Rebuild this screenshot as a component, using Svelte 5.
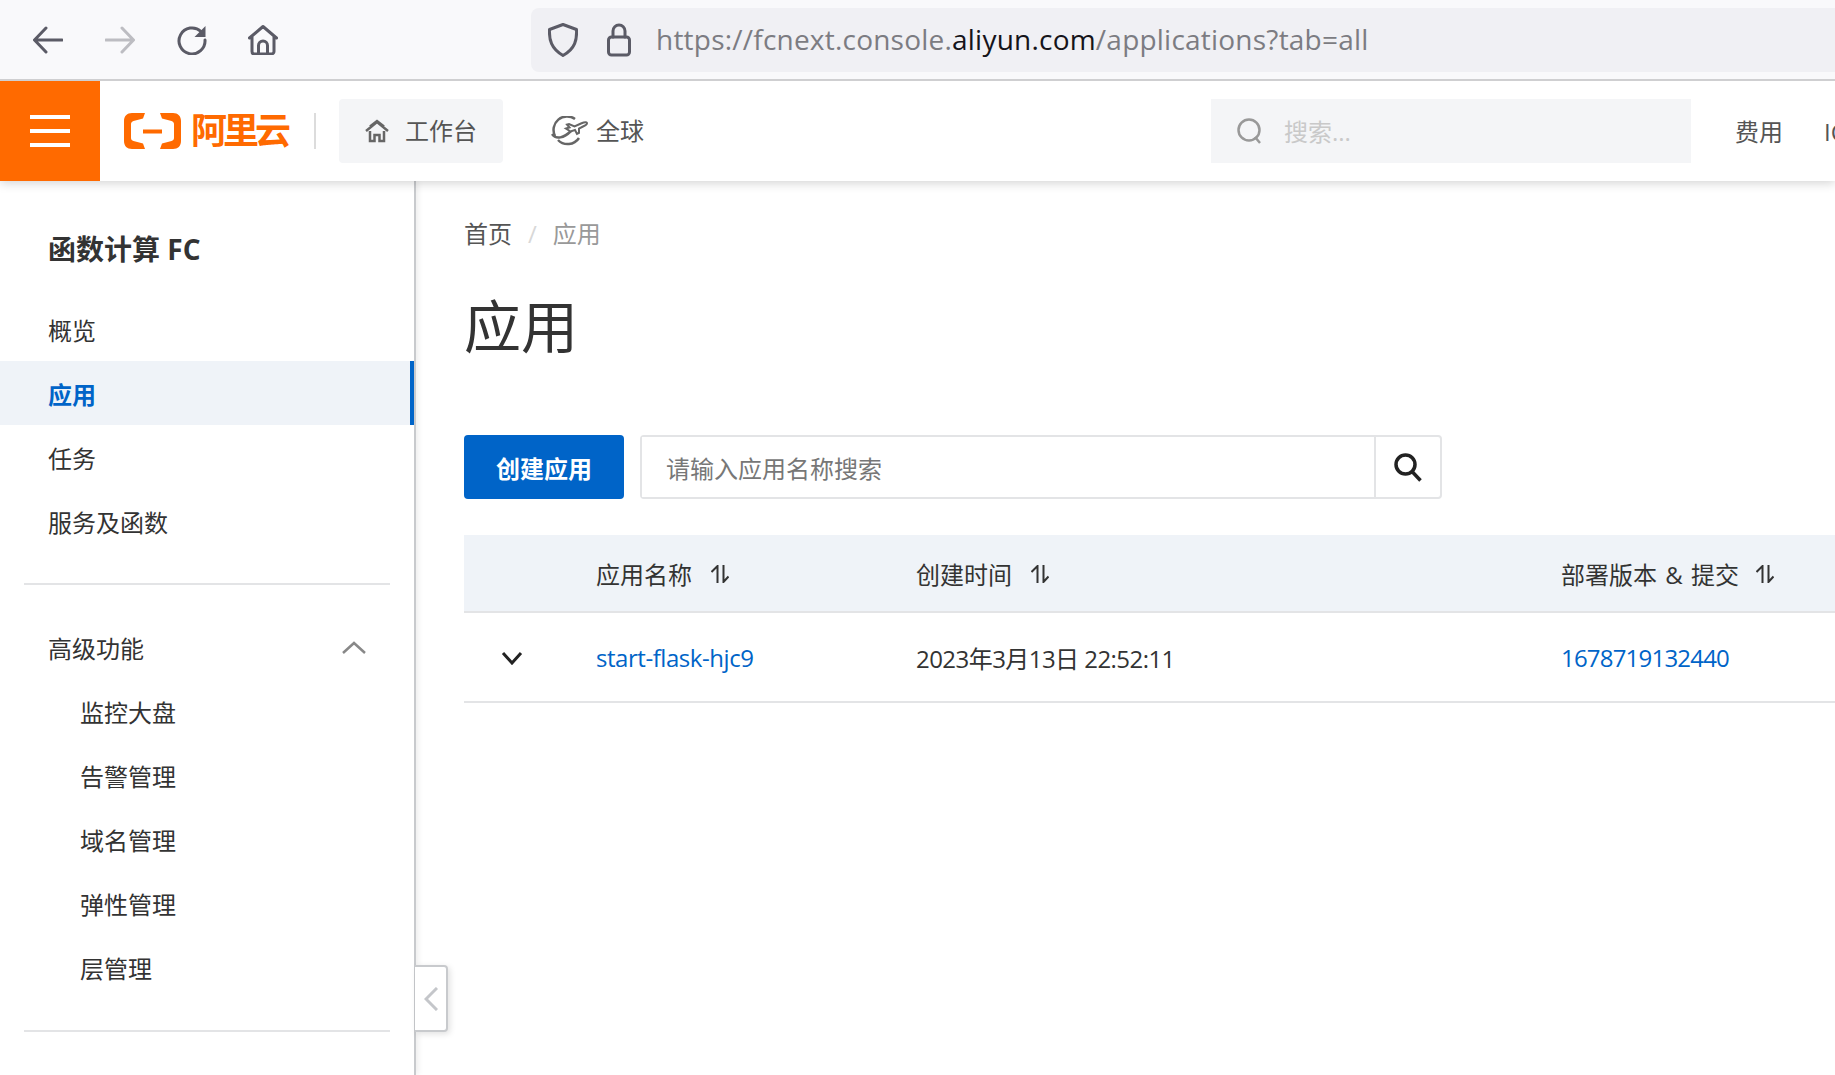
<script>
  const topNav = ["概览", "应用", "任务", "服务及函数"];
  const advanced = ["监控大盘", "告警管理", "域名管理", "弹性管理", "层管理"];
  let open = $state(true);
</script>

<div class="browser">
  <div class="tools">
    <svg class="tb" viewBox="0 0 30 28" width="30" height="28"><path d="M29 14H2M13 2 1.500 14 13 26" /></svg>
    <svg class="tb off" viewBox="0 0 30 28" width="30" height="28"><path d="M1 14h27M17 2l11.500 12L17 26" /></svg>
    <svg class="tb" viewBox="0 0 30 30" width="30" height="30"><path d="M24 6.500A13 13 0 1 0 28 15" /><path class="fill" d="M28.500 1v11h-11z" /></svg>
    <svg class="tb home" viewBox="0 0 30 30" width="30" height="30"><path d="M1.500 13 15 1.500 28.500 13M4 11v15.500A2.500 2.500 0 0 0 6.500 29h17a2.500 2.500 0 0 0 2.500-2.500V11M10.500 29V20.500a4.500 4.500 0 0 1 9 0V29" /></svg>
  </div>
  <div class="address">
    <svg class="tb" viewBox="0 0 30 34" width="30" height="34"><path d="M15 1.500 28.500 6.500c.5 10-1 19-13.500 26C3 25.500 1 16.500 1.500 6.500z" /></svg>
    <svg class="tb" viewBox="0 0 24 34" width="24" height="34"><path d="M6 14V8a6 6 0 0 1 12 0v6" /><rect x="1.500" y="14" width="21" height="18" rx="3" /></svg>
    <span class="url">https://fcnext.console.<b>aliyun.com</b>/applications?tab=all</span>
  </div>
</div>

<header class="topbar">
  <button class="burger" aria-label="菜单"><i></i><i></i><i></i></button>
  <div class="logo">
    <svg viewBox="0 0 57 36" width="57" height="36">
      <path d="M21 0H8C3 0 0 3 0 8v20c0 5 3 8 8 8h13l-2-5.500-9.500-2.500C8 27.500 7 26.500 7 25V11c0-1.500 1-2.500 2.500-3L19 5.500z" />
      <path d="M36 0h13c5 0 8 3 8 8v20c0 5-3 8-8 8H36l2-5.500 9.500-2.500c1.500-.5 2.500-1.500 2.500-3V11c0-1.500-1-2.500-2.500-3L38 5.500z" />
      <rect x="19" y="16.500" width="19" height="4" />
    </svg>
    <span>阿里云</span>
  </div>
  <div class="sep"></div>
  <div class="nav-item boxed">
    <svg viewBox="0 0 26 24" width="26" height="24"><path d="M2 12 13 3l11 9M6 12v10h4.500v-6h5v6H20V12M6 7.500 13 2l7 5.500" /></svg>
    <span>工作台</span>
  </div>
  <div class="nav-item">
    <svg viewBox="0 0 38 30" width="38" height="30">
      <path d="M24 3A13.500 13.500 0 0 0 4 20M7 24A13.500 13.500 0 0 0 28 22M1 18c4 6 12 4 19-3" />
      <path class="plane" d="M15 12.500l3.500-1-2.500-3 2-.5 5.500 2.500 6.500-3c2.500-1 5.500-1.500 6-.5s-1.500 2.500-4 3.500l-4 2v4.500l-2 1-2-4-4.500 1.500z" />
    </svg>
    <span>全球</span>
  </div>
  <div class="global-search">
    <svg viewBox="0 0 26 26" width="26" height="26"><circle cx="12" cy="12" r="10.500" /><path d="M18 19l5 6" /></svg>
    <span>搜索...</span>
  </div>
  <div class="top-links">
    <span>费用</span>
    <span>ICP 备案</span>
  </div>
</header>

<div class="body">
  <aside class="sidebar">
    <h2>函数计算 FC</h2>
    <nav>
      {#each topNav as item}
        <a href="#top" class="row" class:active={item === "应用"}>{item}</a>
      {/each}
    </nav>
    <hr />
    <button class="row group" onclick={() => (open = !open)}>
      高级功能
      <svg class:flip={!open} viewBox="0 0 26 14" width="26" height="14"><path d="M2 12 13 2l11 10" /></svg>
    </button>
    {#if open}
      {#each advanced as item}
        <a href="#top" class="row sub">{item}</a>
      {/each}
    {/if}
    <hr class="last" />
  </aside>

  <button class="collapse" aria-label="收起">
    <svg viewBox="0 0 14 24" width="14" height="24"><path d="M13 1 2 12l11 11" /></svg>
  </button>

  <main>
    <div class="crumbs"><span>首页</span><em>/</em><span class="now">应用</span></div>
    <h1>应用</h1>
    <div class="toolbar">
      <button class="primary">创建应用</button>
      <div class="search">
        <input placeholder="请输入应用名称搜索" />
        <button aria-label="搜索">
          <svg viewBox="0 0 30 30" width="30" height="30"><circle cx="12.500" cy="12.500" r="9.500" /><path d="M19.500 20l8 8.500" /></svg>
        </button>
      </div>
    </div>

    <div class="table">
      <div class="tr head">
        <div></div>
        <div>应用名称 {@render sort()}</div>
        <div>创建时间 {@render sort()}</div>
        <div class="wide">部署版本 &amp; 提交 {@render sort()}</div>
      </div>
      <div class="tr">
        <div class="expand">
          <svg viewBox="0 0 22 14" width="22" height="14"><path d="M2 2l9 10 9-10" /></svg>
        </div>
        <div class="name"><a href="#top">start-flask-hjc9</a></div>
        <div class="date">2023年3月13日 22:52:11</div>
        <div class="ver"><a href="#top">1678719132440</a></div>
      </div>
    </div>
  </main>
</div>

{#snippet sort()}
  <svg class="sort" viewBox="0 0 18 18" width="18" height="18"><path d="M.500 7l6-6v17M12.500 0v17l5-5.500" /></svg>
{/snippet}

<style>
  :global(body) {
    width: 1835px;
    height: 1075px;
    overflow: hidden;
    background: #fff;
    color: #333;
    font-family: "Open Sans", "Noto Sans CJK SC", sans-serif;
    font-size: 24px;
  }
  svg {
    fill: none;
    flex: none;
  }
  button {
    font: inherit;
    border: 0;
    padding: 0;
    background: none;
  }
  a {
    color: inherit;
    text-decoration: none;
  }

  .browser {
    height: 79px;
    border-bottom: 2px solid #cfcfd1;
    background: #f9f9fb;
    display: flex;
    align-items: center;
  }
  .tb {
    stroke: #5b5b66;
    stroke-width: 3;
    stroke-linecap: round;
    stroke-linejoin: round;
  }
  .tb .fill {
    fill: #5b5b66;
    stroke: none;
  }
  .tb.off {
    stroke: #bdbdc2;
  }
  .tools {
    width: 531px;
    padding-left: 33px;
    box-sizing: border-box;
    display: flex;
    align-items: center;
    gap: 42px;
  }
  .tools .home {
    margin-left: -1px;
  }
  .address {
    flex: 1;
    height: 64px;
    background: #f0f0f4;
    border-radius: 8px 0 0 8px;
    display: flex;
    align-items: center;
    padding-left: 17px;
    gap: 29px;
    white-space: nowrap;
  }
  .address .tb + .tb {
    margin-right: -4px;
  }
  .url {
    font-size: 28px;
    color: #7c7c82;
    letter-spacing: 0.22px;
    margin-bottom: 2px;
  }
  .url b {
    font-weight: 400;
    color: #15141a;
  }

  .topbar {
    position: relative;
    z-index: 2;
    height: 100px;
    background: #fff;
    box-shadow: 0 2px 10px rgba(0, 0, 0, 0.18);
    display: flex;
    align-items: center;
    white-space: nowrap;
    overflow: hidden;
    clip-path: inset(0 0 -20px 0);
  }
  .topbar > * {
    flex: none;
  }
  .burger {
    width: 100px;
    height: 100px;
    background: #ff6a00;
    display: flex;
    flex-direction: column;
    justify-content: center;
    align-items: center;
    gap: 10px;
  }
  .burger i {
    width: 40px;
    height: 4px;
    background: #fff;
  }
  .logo {
    margin-left: 24px;
    display: flex;
    align-items: center;
    gap: 10px;
  }
  .logo svg {
    fill: #ff6a00;
  }
  .logo span {
    color: #ff6a00;
    font-size: 36px;
    font-weight: 700;
    letter-spacing: -4px;
    width: 98px;
    line-height: 36px;
  }
  .sep {
    width: 2px;
    height: 36px;
    background: #dcdcdc;
    margin: 0 23px 0 25px;
  }
  .nav-item {
    height: 64px;
    display: flex;
    align-items: center;
    color: #555;
  }
  .nav-item span {
    margin-bottom: 4px;
  }
  .nav-item svg {
    stroke: #666;
    stroke-width: 2.500;
  }
  .nav-item .plane {
    fill: #fff;
    stroke-width: 2;
  }
  .boxed {
    width: 164px;
    box-sizing: border-box;
    padding-left: 25px;
    gap: 15px;
    background: #f4f5f7;
    border-radius: 4px;
    margin-right: 48px;
  }
  .nav-item:not(.boxed) {
    gap: 7px;
  }
  .global-search {
    margin-left: 567px;
    width: 480px;
    height: 64px;
    box-sizing: border-box;
    padding-left: 26px;
    background: #f4f5f7;
    display: flex;
    align-items: center;
    gap: 21px;
    color: #c9c9c9;
  }
  .global-search span {
    margin-bottom: 2px;
  }
  .global-search svg {
    stroke: #999;
    stroke-width: 2.500;
  }
  .top-links {
    margin-left: 44px;
    display: flex;
    gap: 41px;
    color: #555;
    margin-bottom: 2px;
  }

  .body {
    position: relative;
    display: flex;
    height: 894px;
  }
  .sidebar {
    width: 416px;
    flex: none;
    box-sizing: border-box;
    border-right: 2px solid #c8cacd;
    box-shadow: 2px 0 6px rgba(0, 0, 0, 0.08);
    padding-top: 48px;
  }
  h2 {
    margin: 0 0 28px 48px;
    font-size: 28px;
    font-weight: 700;
    line-height: 40px;
    color: #333;
  }
  .row {
    display: flex;
    align-items: center;
    height: 64px;
    padding-left: 48px;
    box-sizing: border-box;
    color: #333;
  }
  .row.active {
    background: #eff3f8;
    color: #0064c8;
    font-weight: 700;
    border-right: 4px solid #0064c8;
  }
  .row.sub {
    padding-left: 80px;
  }
  .group {
    width: 100%;
    justify-content: space-between;
    padding-right: 47px;
    cursor: pointer;
  }
  .group svg {
    stroke: #888;
    stroke-width: 2.500;
    margin-top: 2px;
  }
  .flip {
    transform: rotate(180deg);
  }
  hr {
    margin: 30px 24px 30px;
    border: 0;
    height: 2px;
    background: #e3e4e6;
  }
  hr.last {
    margin-top: 31px;
  }
  .collapse {
    position: absolute;
    left: 415px;
    top: 784px;
    width: 33px;
    height: 67px;
    box-sizing: border-box;
    background: #fff;
    border: 2px solid #c8cacd;
    border-left: 0;
    border-radius: 0 4px 4px 0;
    box-shadow: 2px 2px 6px rgba(0, 0, 0, 0.12);
    display: flex;
    align-items: center;
    justify-content: center;
  }
  .collapse svg {
    stroke: #c4c6ca;
    stroke-width: 3;
  }

  main {
    flex: 1;
    min-width: 0;
    padding: 35px 0 0 48px;
    white-space: nowrap;
    overflow: hidden;
  }
  .crumbs {
    line-height: 36px;
    color: #555;
    display: flex;
  }
  .crumbs em {
    font-style: normal;
    color: #d8d8d8;
    margin: 0 16px;
  }
  .crumbs .now {
    color: #999;
  }
  h1 {
    margin: 38px 0 73px;
    font-size: 57px;
    font-weight: 400;
    line-height: 72px;
    color: #333;
  }
  .toolbar {
    display: flex;
    gap: 16px;
  }
  .primary {
    width: 160px;
    height: 64px;
    background: #0064c8;
    color: #fff;
    font-weight: 700;
    border-radius: 4px;
  }
  .search {
    width: 802px;
    height: 64px;
    box-sizing: border-box;
    border: 2px solid #e3e4e6;
    border-radius: 4px;
    display: flex;
  }
  .search input {
    flex: 1;
    min-width: 0;
    border: 0;
    outline: 0;
    padding: 2px 24px 0;
    font: inherit;
    color: #333;
  }
  .search input::placeholder {
    color: #777;
  }
  .search button {
    width: 66px;
    border-left: 2px solid #e3e4e6;
    display: flex;
    align-items: center;
    justify-content: center;
  }
  .search svg {
    stroke: #222;
    stroke-width: 3.500;
  }

  .table {
    margin-top: 36px;
    width: 1500px;
  }
  .tr {
    display: grid;
    grid-template-columns: 132px 320px 645px 1fr;
    align-items: center;
    height: 90px;
    border-bottom: 2px solid #e3e4e6;
    box-sizing: border-box;
  }
  .tr > div {
    padding-top: 1px;
  }
  .tr.head {
    height: 78px;
    background: #eff3f8;
  }
  .tr.head > div {
    display: flex;
    align-items: center;
    gap: 19px;
  }
  .tr.head > .wide {
    word-spacing: 2px;
    gap: 17px;
  }
  .name {
    letter-spacing: -0.45px;
  }
  .date {
    letter-spacing: -0.55px;
  }
  .ver {
    letter-spacing: -0.8px;
  }
  .expand {
    padding-left: 37px;
    display: flex;
  }
  .expand svg {
    stroke: #222;
    stroke-width: 3;
  }
  .sort {
    stroke: #333;
    stroke-width: 2;
  }
  .tr a {
    color: #0064c8;
  }
</style>
